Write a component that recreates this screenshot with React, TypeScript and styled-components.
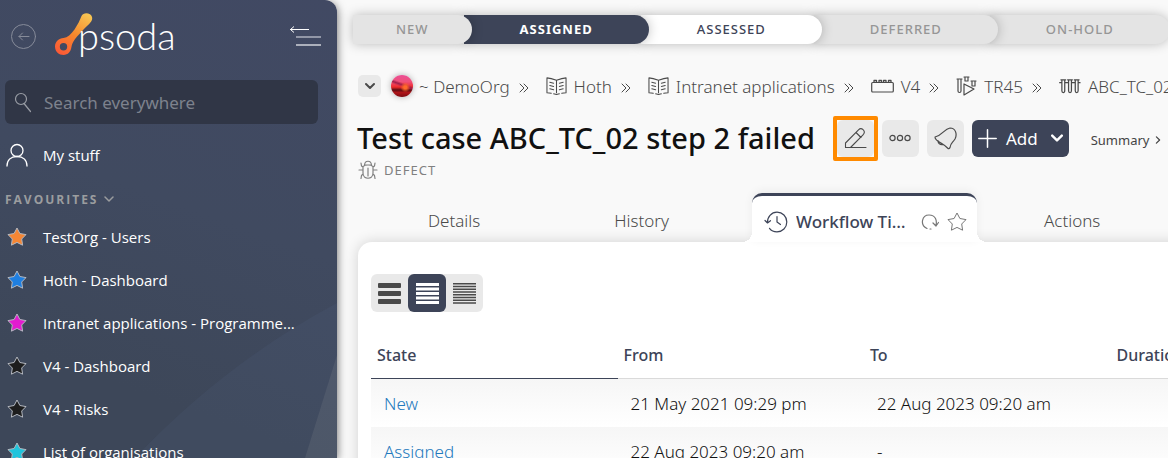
import React from "react";
import styled, { createGlobalStyle, css } from "styled-components";

const navy = "#3d4458";

const GlobalStyle = createGlobalStyle`
  * { box-sizing: border-box; }
  html, body { margin: 0; height: 100%; }
  body {
    background: #f9f9f9;
    color: #111;
    font-family: "Noto Sans", "Open Sans", sans-serif;
    font-size: 17px;
    overflow: hidden;
  }
  button { font: inherit; color: inherit; border: 0; padding: 0; background: none; cursor: pointer; }
  a { color: inherit; text-decoration: none; }
  svg { display: block; flex: none; }
`;

const Page = styled.div`
  display: flex;
  height: 100vh;
`;

/* ---------- Sidebar ---------- */

const Sidebar = styled.aside`
  position: relative;
  flex: 0 0 337px;
  padding: 0 19px 0 5px;
  overflow: hidden;
  border-radius: 0 12px 0 0;
  background: linear-gradient(200deg, #414963 0%, #404a60 45%, #3d4759 80%);
  color: #fff;
  font-family: "Open Sans", sans-serif;
  font-size: 15px;
`;

const SidebarShade = styled.div`
  display: flex;
  flex: none;
  border-radius: 0 12px 0 0;
  box-shadow: 0 2px 10px rgba(0, 0, 0, 0.6);
  z-index: 1;
`;

const Facets = styled.svg`
  position: absolute;
  right: 0;
  bottom: 0;
`;

const SidebarHead = styled.header`
  display: flex;
  align-items: center;
  height: 80px;
  margin-right: -4px;
  padding: 0 0 6px 5px;
`;

const LogoLink = styled.a`
  margin: 0 auto 0 17px;
`;

const SearchBox = styled.label`
  display: flex;
  align-items: center;
  gap: 11px;
  height: 44px;
  padding: 0 8px;
  border-radius: 6px;
  background: #303646;
`;

const SearchInput = styled.input`
  flex: 1;
  min-width: 0;
  padding: 0;
  border: 0;
  outline: 0;
  background: none;
  color: #fff;
  font: 17px "Noto Sans", "Open Sans", sans-serif;
  &::placeholder { color: #7d828d; opacity: 1; }
`;

const NavLink = styled.a`
  position: relative;
  display: flex;
  align-items: center;
  gap: 14px;
  height: 43px;
  white-space: nowrap;
`;

const MyStuff = styled(NavLink)`
  height: 62px;
`;

const NavIcon = styled.span`
  display: flex;
  justify-content: center;
  width: 24px;
`;

const SectionToggle = styled.button`
  display: flex;
  align-items: center;
  gap: 6px;
  height: 26px;
  color: #9b9d9f;
  font-size: 12px;
  font-weight: 700;
  letter-spacing: 2px;
`;

const FavList = styled.nav`
  padding-top: 3px;
`;

/* ---------- Main ---------- */

const Main = styled.main`
  flex: 1;
  min-width: 0;
  overflow: hidden;
  padding-left: 16px;
`;

const Steps = styled.ol`
  display: flex;
  margin: 15px 0 0;
  padding: 0;
  list-style: none;
  width: max-content;
`;

type StepTone = "past" | "current" | "next";

const toneStyles = {
  past: css`background: #e4e4e4; color: #969696;`,
  current: css`background: ${navy}; color: #fff; font-weight: 700;`,
  next: css`background: #fff; color: ${navy};`,
};

const Step = styled.li<{ $tone: StepTone; $level: number }>`
  position: relative;
  z-index: ${(p) => p.$level};
  height: 29px;
  line-height: 29px;
  padding: 0 56px;
  text-align: center;
  border-radius: 0 15px 15px 0;
  font-size: 13px;
  font-weight: 500;
  letter-spacing: 1px;
  white-space: nowrap;
  box-shadow: 0 0 12px rgba(0, 0, 0, 0.25);
  &:first-child { padding: 0 43px; }
  & + & { margin-left: -8px; }
  ${(p) => toneStyles[p.$tone]}
`;

const Crumbs = styled.nav`
  display: flex;
  align-items: center;
  height: 24px;
  margin: 30px 0 0 5px;
  color: #4a4a4a;
  font-weight: 300;
  white-space: nowrap;
  & > * { flex: none; }
`;

const CrumbToggle = styled.button`
  display: grid;
  place-items: center;
  width: 23px;
  height: 22px;
  margin-right: 10px;
  border-radius: 5px;
  background: #e9e9e9;
`;

const Avatar = styled.span`
  width: 22px;
  height: 22px;
  margin-right: 6px;
  border-radius: 50%;
  background:
    radial-gradient(circle at 65% 56%, #ff6a2a 0 8%, transparent 26%),
    linear-gradient(200deg, transparent 38%, #a01f4a 46%, transparent 54%),
    linear-gradient(#ea4f96 0%, #f0507a 30%, #ee2a2b 55%, #5c0d14 68%, #b01419 80%, #7a0b12 100%);
  box-shadow: 0 0 6px rgba(0, 0, 0, 0.3);
`;

const Crumb = styled.a`
  display: flex;
  align-items: center;
  gap: 7px;
`;

const Separator = styled.span`
  display: flex;
  padding: 3px 17px 0 9px;
`;

const TitleRow = styled.div`
  display: flex;
  align-items: center;
  gap: 8px;
  height: 40px;
  margin: 20px 0 0 4px;
  white-space: nowrap;
`;

const Title = styled.h1`
  margin: 0 14px 0 0;
  font-size: 29px;
  font-weight: 500;
  line-height: 40px;
`;

const ToolButton = styled.button<{ $highlight?: boolean }>`
  position: relative;
  display: grid;
  place-items: center;
  width: 37px;
  height: 37px;
  border-radius: 6px;
  background: #e9e9e9;
  color: #4a4a4a;
  ${(p) => p.$highlight && css`
    &::after {
      content: "";
      position: absolute;
      inset: -4px;
      border: 4px solid #ff8a00;
      border-radius: 2px;
    }
  `}
`;

const AddButton = styled.button`
  display: flex;
  align-items: center;
  gap: 9px;
  height: 37px;
  padding: 0 6px;
  border-radius: 6px;
  background: ${navy};
  color: #fff;
`;

const AddText = styled.span`
  margin-right: 4px;
`;

const SummaryLink = styled.a`
  display: flex;
  align-items: center;
  gap: 5px;
  margin-left: 14px;
  padding-top: 4px;
  color: #444;
  font-size: 13px;
`;

const Kind = styled.div`
  display: flex;
  align-items: center;
  gap: 6px;
  height: 20px;
  margin: 2px 0 0 5px;
  color: #808080;
  font-size: 13px;
  letter-spacing: 1px;
`;

const Tabs = styled.div`
  display: flex;
  height: 49px;
  margin: 13px 0 0 8px;
  width: max-content;
`;

const Tab = styled.button`
  padding: 5px 67px 0;
  color: #4a4a4a;
  font-weight: 300;
`;

const ActiveTab = styled.div`
  position: relative;
  z-index: 1;
  display: flex;
  align-items: center;
  gap: 8px;
  margin-left: 16px;
  width: 225px;
  padding: 5px 10px 0 12px;
  border-top: 3px solid ${navy};
  border-radius: 10px 10px 0 0;
  background: #fff;
  color: ${navy};
  box-shadow: 0 -2px 10px rgba(0, 0, 0, 0.06);
  &::before, &::after {
    content: "";
    position: absolute;
    bottom: 0;
    width: 10px;
    height: 10px;
  }
  &::before {
    right: 100%;
    background: radial-gradient(circle at 0 0, transparent 10px, #fff 10px);
  }
  &::after {
    left: 100%;
    background: radial-gradient(circle at 100% 0, transparent 10px, #fff 10px);
  }
`;

const ActiveLabel = styled.button`
  flex: 1;
  min-width: 0;
  overflow: hidden;
  text-overflow: ellipsis;
  white-space: nowrap;
  text-align: left;
  font-weight: 500;
`;

const IconButton = styled.button`
  display: flex;
  color: #777;
`;

const Panel = styled.section`
  min-height: 300px;
  margin-left: 5px;
  margin-right: -20px;
  padding: 32px 0 0 13px;
  border-radius: 14px 0 0 0;
  background: #fff;
  box-shadow: 0 0 14px rgba(0, 0, 0, 0.16);
`;

const Density = styled.div`
  display: inline-flex;
  border-radius: 6px;
  background: #e9e9e9;
  vertical-align: top;
`;

const DensityButton = styled.button<{ $on?: boolean }>`
  display: grid;
  place-items: center;
  width: ${(p) => (p.$on ? 38 : 37)}px;
  height: 38px;
  border-radius: 6px;
  background: ${(p) => (p.$on ? navy : "transparent")};
  color: ${(p) => (p.$on ? "#fff" : "#4a4a4a")};
`;

const Table = styled.table`
  width: 986px;
  margin-top: 19px;
  border-spacing: 0;
  table-layout: fixed;
`;

const Th = styled.th<{ $sorted?: boolean }>`
  height: 48px;
  padding: 0 6px;
  border-bottom: 1px solid ${(p) => (p.$sorted ? navy : "#dadada")};
  color: ${navy};
  font-size: 16px;
  font-weight: 500;
  text-align: left;
`;

const Row = styled.tr`
  background: linear-gradient(#f6f6f6, #fff);
`;

const Td = styled.td`
  height: 48px;
  padding: 1px 13px 0;
  font-weight: 300;
  white-space: nowrap;
`;

const StateLink = styled.a`
  color: #2379bd;
`;

/* ---------- Icons ---------- */

const stroke = { fill: "none", stroke: "currentColor", strokeLinecap: "round", strokeLinejoin: "round" } as const;

const Chevron = ({ w = 10, turn = 0, weight = 1.5 }: { w?: number; turn?: number; weight?: number }) => (
  <svg width={w} height={w} viewBox="0 0 10 10" {...stroke} strokeWidth={weight}>
    <path d="M1 3l4 4 4-4" transform={`rotate(${turn} 5 5)`} />
  </svg>
);

const BackIcon = () => (
  <svg width="27" height="27" viewBox="0 0 27 27" {...stroke} stroke="#868b99" strokeWidth="1">
    <circle cx="13.500" cy="12.500" r="12" />
    <path d="M19 12.500H9M12.500 9L9 12.500l3.500 3.500" />
  </svg>
);

const Logo = () => (
  <svg width="126" height="50" viewBox="0 0 126 50" role="img" aria-label="psoda">
    <defs>
      <linearGradient id="drop" x1="0.8" y1="0" x2="0.2" y2="1">
        <stop offset="0" stopColor="#f6c352" />
        <stop offset="0.5" stopColor="#f7882c" />
        <stop offset="1" stopColor="#fb5a36" />
      </linearGradient>
    </defs>
    <path
      fill="url(#drop)"
      fillRule="evenodd"
      d="M27.500 4C29 1 33 .3 36 2.300c2.500 1.800 3 5 1 7.500-2 2.800-6 6-10 10.500-5 5.500-8.500 9-9.500 14.500C16.800 39.800 14 43 9.500 43 5 43 1 39.500 1 34.500 1 29.500 5 26.500 9.500 26c4-.5 7.500-3.500 11-8.500 3.300-5 5.500-9.500 7-13.500zM9.500 31a3.700 3.700 0 1 0 0 7.400 3.700 3.700 0 0 0 0-7.400z"
    />
    <text x="24" y="38" fill="#fff" fontFamily="Lato, sans-serif" fontWeight="300" fontSize="38">psoda</text>
  </svg>
);

const CollapseIcon = () => (
  <svg width="33" height="22" viewBox="0 0 33 22" {...stroke} strokeLinecap="butt">
    <path d="M20 3.500H1M5 .5L1.500 3.500 5 6.500" />
    <path d="M7 11h25" strokeWidth="1.500" stroke="#aeb2bf" />
    <path d="M7 19h25" strokeWidth="1.500" stroke="#d0d3da" />
  </svg>
);

const SearchIcon = () => (
  <svg width="20" height="22" viewBox="0 0 20 22" {...stroke} stroke="#999da5" strokeWidth="1.200">
    <circle cx="8" cy="8" r="5.500" />
    <path d="M11 12.500l6.500 8" />
  </svg>
);

const PersonIcon = () => (
  <svg width="24" height="24" viewBox="0 0 24 24" {...stroke} strokeWidth="1.300">
    <circle cx="12" cy="7.500" r="6" />
    <path d="M2 23c0-6 4-9.500 10-9.500S22 17 22 23" />
  </svg>
);

const starPath =
  "M10 1L12.900 6.500 19 7.600 14.700 12 15.600 18.200 10 15.400 4.400 18.200 5.300 12 1 7.600 7.100 6.500z";

const Star = ({ fill = "none", line = "currentColor", size = 20 }: { fill?: string; line?: string; size?: number }) => (
  <svg width={size} height={size} viewBox="0 0 20 20" strokeLinejoin="round">
    <path d={starPath} fill={fill} stroke={line} strokeWidth="1" />
  </svg>
);

const DoubleChevron = () => (
  <svg width="10" height="10" viewBox="0 0 10 10" {...stroke} strokeWidth="1">
    <path d="M1 1l4 4-4 4M5 1l4 4-4 4" />
  </svg>
);

const BookIcon = () => (
  <svg width="21" height="20" viewBox="0 0 22 20" {...stroke} strokeWidth="1.100">
    <path d="M11 4C8 3 5 2 1 1.500V17c2 0 3 .2 4.500.6M11 4c3-1 6-2 10-2.500V17c-2 0-3 .2-4.500.6M11 4v13M8 18.200l3 .8 3-.8" />
    <path d="M4 6l4 1M4 9.500l4 1M4 13l4 1M18 6l-4 1M18 9.500l-4 1M18 13l-4 1" />
  </svg>
);

const BrickIcon = () => (
  <svg width="23" height="14" viewBox="0 0 23 14" {...stroke} strokeWidth="1.200">
    <rect x=".7" y="3.500" width="21.600" height="9.500" rx="1" />
    <path d="M3 3V1.500h2.500V3M8 3V1.500h2.500V3M12.500 3V1.500H15V3M17.500 3V1.500H20V3" strokeWidth="1.300" />
  </svg>
);

const RunIcon = () => (
  <svg width="21" height="20" viewBox="0 0 21 20" {...stroke} strokeWidth="1.200">
    <path d="M1 3h5M2 3v12c0 2 3 2 3 0V3M8 1h5M9 1v4h3V1M15 5h5M16 5v5h3V5M8 8v11l10-6z" />
  </svg>
);

const TubesIcon = () => (
  <svg width="22" height="16" viewBox="0 0 23 16" {...stroke} strokeWidth="1.300">
    <path d="M2 1.500h5M9 1.500h5M16 1.500h5M3 2v11c0 2.500 3 2.500 3 0V2M10 2v11c0 2.500 3 2.500 3 0V2M17 2v11c0 2.500 3 2.500 3 0V2M.7 4.500H3M6 4.500h4M13 4.500h4M20 4.500h2" />
  </svg>
);

const PencilIcon = () => (
  <svg width="23" height="23" viewBox="0 0 23 23" {...stroke} strokeWidth="1.100">
    <path d="M1.500 20.500V16L14.500 2.800c3-3 7.500 1 5 4.500L6.500 20.500zM6.500 20.500H22M12 5.500l5 5" />
  </svg>
);

const DotsIcon = () => (
  <svg width="22" height="8" viewBox="0 0 22 8" {...stroke} strokeWidth="1.200">
    <circle cx="3.500" cy="4" r="2.600" />
    <circle cx="11" cy="4" r="2.600" />
    <circle cx="18.500" cy="4" r="2.600" />
  </svg>
);

const BellIcon = () => (
  <svg width="23" height="23" viewBox="0 0 23 23" {...stroke} strokeWidth="1.200">
    <path d="M1 10C9 8 10 2 16 1c5.500 0 7.500 6 5 11-2.500 4-4.500 4-5 8.500-.5 1.500-1.500 1.500-2.500.5-2-2-4-3.500-6.500-5C4 14.500 1 12 1 10zM4 13.500c0 3 2 4.500 5 4" />
  </svg>
);

const PlusIcon = () => (
  <svg width="19" height="19" viewBox="0 0 19 19" {...stroke} strokeWidth="1.500">
    <path d="M9.500.8v17.400M.8 9.500h17.400" />
  </svg>
);

const BugIcon = () => (
  <svg width="20" height="20" viewBox="0 0 20 20" {...stroke} strokeWidth="1.200">
    <path d="M6.500 5C7 0 13 0 13.500 5zM5 6.500C7 4.500 13 4.500 15 6.500V13c0 7-10 7-10 0zM10 8v8M1 10h4M15 10h4M3 3l.5 3L5 7M17 3l-.5 3L15 7M3 18.500l.5-3L5 14M17 18.500l-.5-3L15 14" />
  </svg>
);

const HistoryIcon = () => (
  <svg width="24" height="22" viewBox="0 0 24 22" {...stroke} strokeWidth="1.200">
    <path d="M3.500 12C3 6 7.500 1.200 13 1.200S22.800 5.500 22.800 11 18.500 20.800 13 20.800c-3.500 0-6-1.500-7.500-3.500M1 9.500L3.500 12l3-2.300M13 5.500V11l3.500 2.500" />
  </svg>
);

const RefreshIcon = () => (
  <svg width="18" height="18" viewBox="0 0 18 18" {...stroke} strokeWidth="1.200">
    <path d="M6 15.500C-1.500 12 1 2 8 2s8 6 7 10.500M12 10l3 3 2.500-3.500M9 16h1" />
  </svg>
);

const bars = (n: number, h: number, pitch: number) =>
  Array.from({ length: n }, (_, i) => (
    <rect key={i} x="0" y={i * pitch} width="23" height={h} rx={h > 3 ? 1 : 0} fill="currentColor" />
  ));

const BarsIcon = ({ n, h, pitch }: { n: number; h: number; pitch: number }) => (
  <svg width="23" height="21" viewBox="0 0 23 21">{bars(n, h, pitch)}</svg>
);

/* ---------- Content ---------- */

const favourites = [
  ["TestOrg - Users", "#f58634"],
  ["Hoth - Dashboard", "#1f7fe0"],
  ["Intranet applications - Programme...", "#e31bd0"],
  ["V4 - Dashboard", "#1d1d1d"],
  ["V4 - Risks", "#1d1d1d"],
  ["List of organisations", "#20c4dc"],
];

const steps: [string, StepTone][] = [
  ["NEW", "past"],
  ["ASSIGNED", "current"],
  ["ASSESSED", "next"],
  ["DEFERRED", "past"],
  ["ON-HOLD", "past"],
];

const crumbs: [string, React.ReactNode][] = [
  ["Hoth", <BookIcon />],
  ["Intranet applications", <BookIcon />],
  ["V4", <BrickIcon />],
  ["TR45", <RunIcon />],
  ["ABC_TC_02", <TubesIcon />],
];

const rows = [
  ["New", "21 May 2021 09:29 pm", "22 Aug 2023 09:20 am"],
  ["Assigned", "22 Aug 2023 09:20 am", "-"],
];

export default function App() {
  return (
    <Page>
      <GlobalStyle />
      <SidebarShade>
        <Sidebar>
          <Facets width="202" height="155" viewBox="0 0 202 155" aria-hidden="true">
            <path d="M202 0Q90 60 0 155h202z" fill="#6676a0" opacity="0.1" />
            <path d="M202 52L170 155h32z" fill="#aaa" opacity="0.13" />
          </Facets>
          <SidebarHead>
            <IconButton aria-label="Back"><BackIcon /></IconButton>
            <LogoLink href="#"><Logo /></LogoLink>
            <button aria-label="Collapse menu"><CollapseIcon /></button>
          </SidebarHead>
          <SearchBox>
            <SearchIcon />
            <SearchInput type="search" aria-label="Search everywhere" placeholder="Search everywhere" />
          </SearchBox>
          <MyStuff href="#"><NavIcon><PersonIcon /></NavIcon>My stuff</MyStuff>
          <SectionToggle>FAVOURITES<Chevron /></SectionToggle>
          <FavList>
            {favourites.map(([name, color]) => (
              <NavLink href="#" key={name}>
                <NavIcon><Star fill={color} line="#b4b8c0" /></NavIcon>{name}
              </NavLink>
            ))}
          </FavList>
        </Sidebar>
      </SidebarShade>

      <Main>
        <Steps>
          {steps.map(([name, tone], i) => (
            <Step key={name} $tone={tone} $level={6 - i}>{name}</Step>
          ))}
        </Steps>

        <Crumbs aria-label="Breadcrumb">
          <CrumbToggle aria-label="Show path"><Chevron weight={2} /></CrumbToggle>
          <Avatar />
          <Crumb href="#">~ DemoOrg</Crumb>
          {crumbs.map(([name, icon]) => (
            <React.Fragment key={name}>
              <Separator><DoubleChevron /></Separator>
              <Crumb href="#">{icon}{name}</Crumb>
            </React.Fragment>
          ))}
        </Crumbs>

        <TitleRow>
          <Title>Test case ABC_TC_02 step 2 failed</Title>
          <ToolButton $highlight aria-label="Edit"><PencilIcon /></ToolButton>
          <ToolButton aria-label="More"><DotsIcon /></ToolButton>
          <ToolButton aria-label="Notifications"><BellIcon /></ToolButton>
          <AddButton><PlusIcon /><AddText>Add</AddText><Chevron w={12} weight={2} /></AddButton>
          <SummaryLink href="#">Summary<Chevron w={8} turn={-90} /></SummaryLink>
        </TitleRow>
        <Kind><BugIcon />DEFECT</Kind>

        <Tabs>
          <Tab>Details</Tab>
          <Tab>History</Tab>
          <ActiveTab>
            <HistoryIcon />
            <ActiveLabel>Workflow Timeline</ActiveLabel>
            <IconButton aria-label="Refresh"><RefreshIcon /></IconButton>
            <IconButton aria-label="Favourite"><Star /></IconButton>
          </ActiveTab>
          <Tab>Actions</Tab>
        </Tabs>

        <Panel>
          <Density>
            <DensityButton aria-label="Relaxed rows"><BarsIcon n={3} h={5} pitch={8} /></DensityButton>
            <DensityButton $on aria-label="Normal rows"><BarsIcon n={5} h={3} pitch={4.5} /></DensityButton>
            <DensityButton aria-label="Compact rows"><BarsIcon n={8} h={1.5} pitch={2.75} /></DensityButton>
          </Density>
          <Table>
            <thead>
              <tr>
                <Th $sorted>State</Th>
                <Th>From</Th>
                <Th>To</Th>
                <Th>Duration</Th>
              </tr>
            </thead>
            <tbody>
              {rows.map(([state, from, to]) => (
                <Row key={state}>
                  <Td><StateLink href="#">{state}</StateLink></Td>
                  <Td>{from}</Td>
                  <Td>{to}</Td>
                  <Td />
                </Row>
              ))}
            </tbody>
          </Table>
        </Panel>
      </Main>
    </Page>
  );
}
